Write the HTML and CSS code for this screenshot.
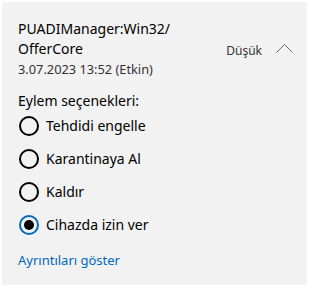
FILE: index.html
```html
<!DOCTYPE html>
<html lang="tr">
<head>
<meta charset="utf-8">
<link rel="stylesheet" href="styles.css">
</head>
<body>
<div class="panel">
  <div class="header">
    <div class="info">
      <div class="title">PUADIManager:Win32/<br>OfferCore</div>
      <div class="date">3.07.2023 13:52 (Etkin)</div>
    </div>
    <div class="level">
      <span class="sev">Düşük</span>
      <svg class="chev" width="17" height="10" viewBox="0 0 17 10"><path d="M0.5 9.5 L8.5 1.5 L16.5 9.5" fill="none" stroke="#666" stroke-width="1"/></svg>
    </div>
  </div>
  <div class="actions-label">Eylem seçenekleri:</div>
  <div class="options">
    <label class="opt"><span class="radio"></span>Tehdidi engelle</label>
    <label class="opt"><span class="radio"></span>Karantinaya Al</label>
    <label class="opt"><span class="radio"></span>Kaldır</label>
    <label class="opt"><span class="radio checked"></span>Cihazda izin ver</label>
  </div>
  <a class="details">Ayrıntıları göster</a>
</div>
</body>
</html>
```
FILE: styles.css
```css
html, body { margin: 0; padding: 0; background: #fff; }
body { padding: 2px; font-family: "Noto Sans", "Open Sans", sans-serif; color: #000; }
.panel {
  width: 305px;
  height: 283px;
  box-sizing: border-box;
  background: #f2f2f2;
  padding: 17px 16px 0 16px;
}
.header { display: flex; align-items: flex-start; }
.info { flex: 1; }
.title { font-size: 14px; line-height: 20px; }
.date { font-size: 12.8px; line-height: 18px; color: #333; margin-top: 1px; }
.level { display: flex; align-items: center; margin-top: 23px; gap: 14px; margin-right: -2px; }
.sev { font-size: 12px; color: #333; }
.chev { display: block; margin-top: -6px; }
.actions-label { font-size: 14px; line-height: 20px; margin-top: 13px; }
.options { display: flex; flex-direction: column; gap: 13px; margin-top: 5px; }
.opt { display: flex; align-items: center; gap: 7px; font-size: 14px; line-height: 20px; }
.radio {
  width: 20px; height: 20px; box-sizing: border-box;
  border: 2px solid #000; border-radius: 50%;
  display: flex; align-items: center; justify-content: center;
  margin-left: 1px;
}
.radio.checked { border-color: #0067c0; }
.radio.checked::after { content: ""; width: 10px; height: 10px; border-radius: 50%; background: #000; }
.details { display: block; margin-top: 16px; font-size: 13px; color: #0067c0; }
```
